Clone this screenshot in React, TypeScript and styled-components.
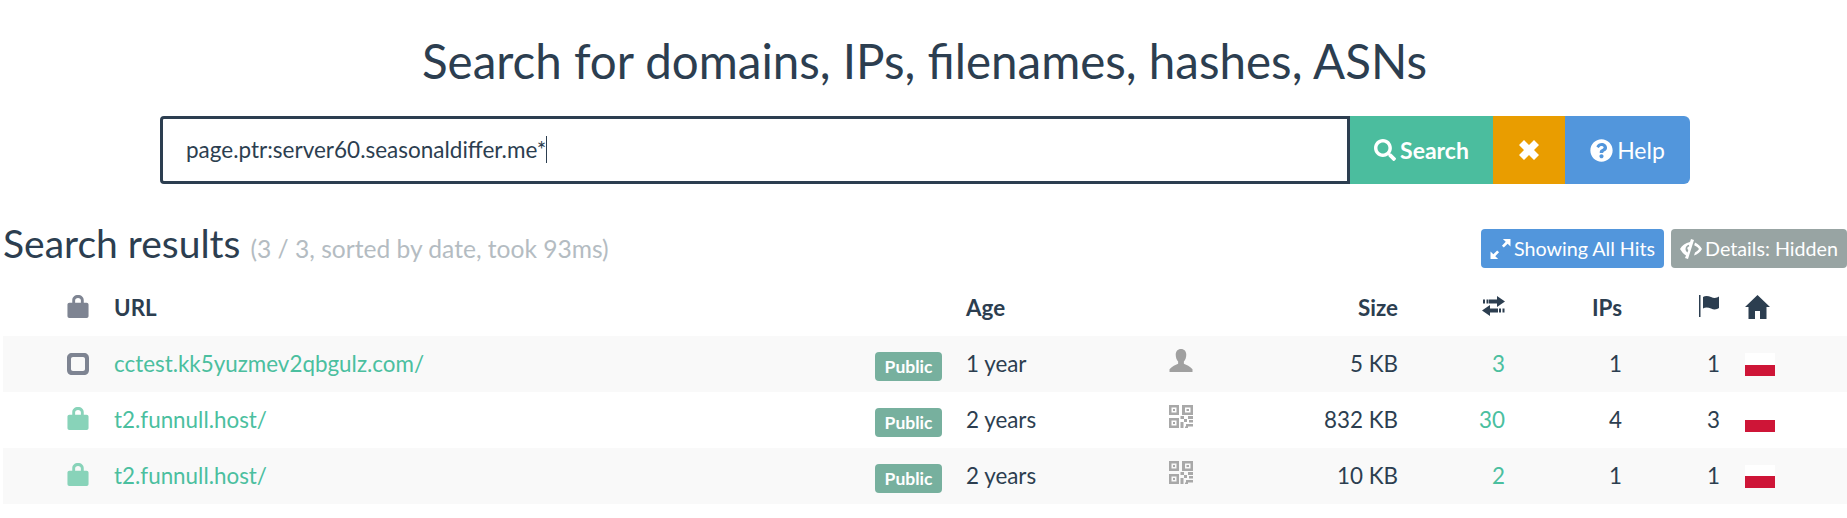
import React from "react";
import styled, { createGlobalStyle } from "styled-components";
import { FaSearch, FaQuestionCircle } from "react-icons/fa";

const GlobalStyle = createGlobalStyle`
  html, body {
    margin: 0;
    padding: 0;
    background: #fff;
    color: #2c3e50;
    font-family: Lato, "Open Sans", sans-serif;
    overflow: hidden;
  }
`;

const Page = styled.div`
  width: 1847px;
  height: 518px;
  display: flex;
  flex-direction: column;
`;

const Title = styled.h2`
  margin: 0;
  padding: 33px 0 0 2px;
  height: 116px;
  box-sizing: border-box;
  text-align: center;
  font-size: 47.5px;
  line-height: 55px;
  font-weight: 400;
`;

const SearchForm = styled.div`
  display: flex;
  margin-left: 160px;
  height: 68px;
`;

const QueryBox = styled.div`
  width: 1190px;
  box-sizing: border-box;
  border: 3px solid #2c3e50;
  border-radius: 4px 0 0 4px;
  padding: 0 0 2px 23px;
  display: flex;
  align-items: center;
  font-size: 22.5px;
`;

const Caret = styled.span`
  display: inline-block;
  width: 1px;
  height: 27px;
  background: #2c3e50;
`;

const FormButton = styled.div<{ $bg: string; $w: number; $end?: boolean }>`
  width: ${(p) => p.$w}px;
  background: ${(p) => p.$bg};
  color: #fff;
  display: flex;
  align-items: center;
  justify-content: center;
  gap: 4px;
  font-size: 23px;
  border-radius: ${(p) => (p.$end ? "0 6px 6px 0" : "0")};
`;

const SearchLabel = styled.span`
  font-weight: 700;
`;

const ResultsBar = styled.div`
  display: flex;
  align-items: center;
  justify-content: space-between;
  margin-top: 45px;
  height: 39px;
  padding-left: 3px;
`;

const ResultsHeading = styled.h3`
  margin: 0 0 6px;
  font-size: 39px;
  line-height: 47px;
  font-weight: 400;
`;

const ResultsNote = styled.small`
  font-size: 24.6px;
  color: #b4bcc2;
`;

const BarActions = styled.div`
  display: flex;
  gap: 7px;
`;

const SmallButton = styled.div<{ $bg: string; $w: number }>`
  width: ${(p) => p.$w}px;
  height: 39px;
  border-radius: 4px;
  background: ${(p) => p.$bg};
  color: #fff;
  display: flex;
  align-items: center;
  justify-content: center;
  gap: 3px;
  font-size: 19.7px;
`;

const Table = styled.table`
  margin: 12px 0 0 3px;
  width: 1844px;
  table-layout: fixed;
  border-collapse: collapse;
  font-size: 22.4px;
`;

const Row = styled.tr<{ $striped?: boolean }>`
  height: 56px;
  background: ${(p) => (p.$striped ? "#f9f9f9" : "#fff")};
`;

const HeadRow = styled.tr`
  height: 56px;
`;

const Cell = styled.td<{ $right?: boolean }>`
  padding: 0 8px 2px;
  text-align: ${(p) => (p.$right ? "right" : "left")};
  vertical-align: middle;
  white-space: nowrap;
`;

const BadgeCell = styled.td`
  padding: 5px 8px 0;
  vertical-align: middle;
`;

const IconCell = styled.td`
  padding: 0 8px 7px;
  vertical-align: middle;
`;

const HeadCell = styled.th<{ $right?: boolean }>`
  padding: 0 8px 2px;
  text-align: ${(p) => (p.$right ? "right" : "left")};
  vertical-align: middle;
  font-weight: 700;
`;

const LockCell = styled.td`
  padding: 0 0 0 64px;
  vertical-align: middle;
`;

const LockHeadCell = styled.th`
  padding: 0 0 0 64px;
  vertical-align: middle;
  text-align: left;
`;

const CountryCell = styled.td`
  padding: 0 0 0 17px;
  vertical-align: middle;
`;

const CountryHeadCell = styled.th`
  padding: 0 0 3px 17px;
  vertical-align: middle;
  text-align: left;
`;

const ResultLink = styled.a`
  color: #4bbf9f;
  text-decoration: none;
`;

const Badge = styled.span`
  display: flex;
  width: 67px;
  height: 29px;
  align-items: center;
  justify-content: center;
  border-radius: 4px;
  background: #77b09e;
  color: #fff;
  font-size: 17.5px;
  font-weight: 700;
`;

const IconBox = styled.svg<{ $color?: string }>`
  display: block;
  fill: ${(p) => p.$color || "#2c3e50"};
`;

const LockGlyph = styled(IconBox)`
  margin-bottom: 3px;
`;

const InlineIcon = styled.svg`
  display: inline-block;
  vertical-align: middle;
  margin-bottom: 5px;
  fill: #2c3e50;
`;

const FlagBox = styled.span`
  display: block;
  width: 30px;
  height: 23px;
  background: linear-gradient(#fff 50%, #ce1537 50%);
`;

const LockIcon = ({ color }: { color: string }) => (
  <LockGlyph $color={color} width="22" height="23" viewBox="0 0 22 24">
    <path fillRule="evenodd" d="M2 8h3V5.500C5 2 7.500 0 11 0s6 2 6 5.500V8h3c1.200 0 2 .8 2 2v12c0 1.200-.8 2-2 2H2c-1.200 0-2-.8-2-2V10c0-1.200.8-2 2-2zm6 0h6V5.500C14 4 12.800 3 11 3S8 4 8 5.500V8z" />
  </LockGlyph>
);

const NoLockIcon = () => (
  <IconBox $color="#7e8492" width="22" height="22" viewBox="0 0 22 22">
    <path fillRule="evenodd" d="M5 0h12c3 0 5 2 5 5v12c0 3-2 5-5 5H5c-3 0-5-2-5-5V5c0-3 2-5 5-5zm1 4C4.800 4 4 4.800 4 6v10c0 1.200.8 2 2 2h10c1.200 0 2-.8 2-2V6c0-1.200-.8-2-2-2H6z" />
  </IconBox>
);

const UserIcon = () => (
  <IconBox $color="#a0a0a0" width="24" height="23" viewBox="0 0 24 24">
    <path d="M12 0c3.500 0 5.500 2.500 5.500 6 0 3-1 5.500-2.500 7v2.500c3 1.500 6 2.500 9 5.500v3H0v-3c3-3 6-4 9-5.500V13C7.500 11.500 6.500 9 6.500 6c0-3.500 2-6 5.500-6z" />
  </IconBox>
);

const QrIcon = () => (
  <IconBox $color="#a8a8a8" width="24" height="23" viewBox="0 0 24 23">
    <path fillRule="evenodd" d="M0 0h10v10H0V0zm2.500 2.500v5h5v-5h-5zM13 0h11v10H13V0zm3 2.500v5h5.500v-5H16zM0 13h10v10H0V13zm2.500 2.500v5h5v-5h-5zM11.500 11H15v3h-3.500zM15 14h3v3h-3zM19 11h5v3h-5zM11.500 17h3v6h-3zM17 19h7v2.500h-7zM20 15h4v2.500h-4zM16 21.500h3V23h-3z" />
    <rect x="4" y="4" width="2" height="2" />
    <rect x="17.500" y="4" width="2.500" height="2" />
    <rect x="4" y="17" width="2" height="2" />
  </IconBox>
);

const TransferIcon = () => (
  <InlineIcon width="23" height="20" viewBox="0 0 23 20">
    <path d="M15 0l8 5.500-8 5.500V7.500H7v-4h8V0zM1 3.500h2v4H1zM4.500 3.500h2v4h-2zM8 12.500h8v4H8V20l-8-5.500L8 9v3.500zM17 12.500h2v4h-2zM20.500 12.500h2v4h-2z" />
  </InlineIcon>
);

const PennantIcon = () => (
  <InlineIcon width="21" height="22" viewBox="0 0 21 22">
    <rect x="0" y="0" width="1.500" height="22" />
    <path d="M4 2c2-1.500 5-1.500 8 0 3 1.500 6 1 8-.5V13c-2 1.500-5 2-8 .5s-6-1.500-8 0V2z" />
  </InlineIcon>
);

const HouseIcon = () => (
  <IconBox width="25" height="24" viewBox="0 0 25 24">
    <path d="M12.500 0L25 12h-3.500v12H15v-8h-5v8H3.500V12H0z" />
  </IconBox>
);

const ClearIcon = () => (
  <svg width="20" height="20" viewBox="0 0 20 20" fill="#fff">
    <path d="M5 0l5 5 5-5 5 5-5 5 5 5-5 5-5-5-5 5-5-5 5-5-5-5z" />
  </svg>
);

const ResizeIcon = () => (
  <svg width="21" height="20" viewBox="0 0 21 21" fill="#fff">
    <path d="M13 0h8v8l-3-3-4 4-2-2 4-4zM8 21H0v-8l3 3 4-4 2 2-4 4z" />
  </svg>
);

const HiddenEyeIcon = () => (
  <svg width="22" height="20" viewBox="0 0 22 20" fill="#fff">
    <path fillRule="evenodd" d="M0 10C2 6.500 5.500 3.700 10 3l1-3 3 1-6 19-3-1 1-2.500C3.500 15 1.500 12.500 0 10zm9-4.200C7 6.200 5.500 8 5.500 10c0 1.500.8 2.700 2 3.500L8.300 11C7.500 10.500 7 9.500 7.500 8.500c.3-.6 1-1 1.700-1z" />
    <path d="M15 3.500c3 1.200 5.500 4 7 6.500-1.800 3-4.500 5.500-8 6.500l1-3c1.500-.9 3-2.200 4-3.500-1-1.300-2.200-2.500-4.800-3.700z" />
  </svg>
);

const rows = [
  { url: "cctest.kk5yuzmev2qbgulz.com/", age: "1 year", size: "5 KB", reqs: 3, ips: 1, countries: 1, secure: false, user: true },
  { url: "t2.funnull.host/", age: "2 years", size: "832 KB", reqs: 30, ips: 4, countries: 3, secure: true, user: false },
  { url: "t2.funnull.host/", age: "2 years", size: "10 KB", reqs: 2, ips: 1, countries: 1, secure: true, user: false },
];

const App = () => (
  <Page>
    <GlobalStyle />
    <Title>Search for domains, IPs, filenames, hashes, ASNs</Title>
    <SearchForm>
      <QueryBox>
        page.ptr:server60.seasonaldiffer.me*
        <Caret />
      </QueryBox>
      <FormButton $bg="#4bbd9e" $w={143}>
        <FaSearch size={22} />
        <SearchLabel>Search</SearchLabel>
      </FormButton>
      <FormButton $bg="#e99d00" $w={72}>
        <ClearIcon />
      </FormButton>
      <FormButton $bg="#5296dc" $w={125} $end>
        <FaQuestionCircle size={23} />
        Help
      </FormButton>
    </SearchForm>
    <ResultsBar>
      <ResultsHeading>
        Search results <ResultsNote>(3 / 3, sorted by date, took 93ms)</ResultsNote>
      </ResultsHeading>
      <BarActions>
        <SmallButton $bg="#5296dc" $w={183}>
          <ResizeIcon />
          Showing All Hits
        </SmallButton>
        <SmallButton $bg="#98a4a3" $w={176}>
          <HiddenEyeIcon />
          Details: Hidden
        </SmallButton>
      </BarActions>
    </ResultsBar>
    <Table>
      <colgroup>
        <col width={103} />
        <col width={761} />
        <col width={91} />
        <col width={203} />
        <col width={129} />
        <col width={116} />
        <col width={107} />
        <col width={117} />
        <col width={98} />
        <col />
      </colgroup>
      <thead>
        <HeadRow>
          <LockHeadCell>
            <LockIcon color="#7e8492" />
          </LockHeadCell>
          <HeadCell>URL</HeadCell>
          <HeadCell />
          <HeadCell>Age</HeadCell>
          <HeadCell />
          <HeadCell $right>Size</HeadCell>
          <HeadCell $right>
            <TransferIcon />
          </HeadCell>
          <HeadCell $right>IPs</HeadCell>
          <HeadCell $right>
            <PennantIcon />
          </HeadCell>
          <CountryHeadCell>
            <HouseIcon />
          </CountryHeadCell>
        </HeadRow>
      </thead>
      <tbody>
        {rows.map((r, i) => (
          <Row key={i} $striped={i % 2 === 0}>
            <LockCell>{r.secure ? <LockIcon color="#88d3b9" /> : <NoLockIcon />}</LockCell>
            <Cell>
              <ResultLink href="#">{r.url}</ResultLink>
            </Cell>
            <BadgeCell>
              <Badge>Public</Badge>
            </BadgeCell>
            <Cell>{r.age}</Cell>
            <IconCell>{r.user ? <UserIcon /> : <QrIcon />}</IconCell>
            <Cell $right>{r.size}</Cell>
            <Cell $right>
              <ResultLink href="#">{r.reqs}</ResultLink>
            </Cell>
            <Cell $right>{r.ips}</Cell>
            <Cell $right>{r.countries}</Cell>
            <CountryCell>
              <FlagBox />
            </CountryCell>
          </Row>
        ))}
      </tbody>
    </Table>
  </Page>
);

export default App;
